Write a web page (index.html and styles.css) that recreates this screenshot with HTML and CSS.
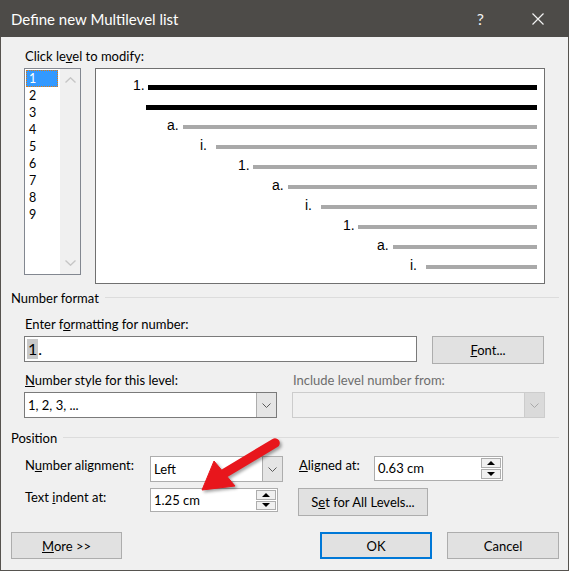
FILE: index.html
```html
<!DOCTYPE html>
<html lang="en">
<head>
    <meta charset="UTF-8">
    <title>Define new Multilevel list</title>
    <link rel="stylesheet" href="styles.css">
</head>
<body>
    <div class="dialog">
        <div class="titlebar">
            <span class="title-text">Define new Multilevel list</span>
            <span class="title-help">?</span>
            <svg class="title-close" width="12" height="12" viewBox="0 0 12 12">
                <path d="M0.5 0.5 L11.5 11.5 M11.5 0.5 L0.5 11.5" stroke="#f2f2f2" stroke-width="1.2" fill="none"/>
            </svg>
        </div>

        <div class="dialog-body">
            <div class="field-label indent">Click le<u>v</u>el to modify:</div>

            <div class="level-row">
                <div class="level-list">
                    <ul class="levels">
                        <li class="selected">1</li>
                        <li>2</li>
                        <li>3</li>
                        <li>4</li>
                        <li>5</li>
                        <li>6</li>
                        <li>7</li>
                        <li>8</li>
                        <li>9</li>
                    </ul>
                    <div class="level-scroll">
                        <svg width="11" height="6" viewBox="0 0 11 6"><path d="M0.5 5.5 L5.5 0.8 L10.5 5.5" stroke="#c6c6c6" stroke-width="1.4" fill="none"/></svg>
                        <svg width="11" height="6" viewBox="0 0 11 6"><path d="M0.5 0.5 L5.5 5.2 L10.5 0.5" stroke="#c6c6c6" stroke-width="1.4" fill="none"/></svg>
                    </div>
                </div>

                <div class="preview">
                    <div class="pv-row pv-1"><span class="pv-num">1.</span><span class="pv-line dark"></span></div>
                    <div class="pv-row pv-cont"><span class="pv-line dark"></span></div>
                    <div class="pv-row pv-2"><span class="pv-num">a.</span><span class="pv-line"></span></div>
                    <div class="pv-row pv-3"><span class="pv-num">i.</span><span class="pv-line"></span></div>
                    <div class="pv-row pv-4"><span class="pv-num">1.</span><span class="pv-line"></span></div>
                    <div class="pv-row pv-5"><span class="pv-num">a.</span><span class="pv-line"></span></div>
                    <div class="pv-row pv-6"><span class="pv-num">i.</span><span class="pv-line"></span></div>
                    <div class="pv-row pv-7"><span class="pv-num">1.</span><span class="pv-line"></span></div>
                    <div class="pv-row pv-8"><span class="pv-num">a.</span><span class="pv-line"></span></div>
                    <div class="pv-row pv-9"><span class="pv-num">i.</span><span class="pv-line"></span></div>
                </div>
            </div>

            <div class="group-head fmt-head"><span>Number format</span><i class="group-rule"></i></div>

            <div class="field-label indent fmt-label">Enter f<u>o</u>rmatting for number:</div>
            <div class="fmt-row">
                <div class="text-box format-box"><span class="sel">1</span>.</div>
                <button class="btn font-btn"><u>F</u>ont...</button>
            </div>

            <div class="style-grid">
                <div class="field-label"><u>N</u>umber style for this level:</div>
                <div class="field-label disabled">Include level number from:</div>
                <div class="combo">
                    <span class="combo-value">1, 2, 3, ...</span>
                    <span class="combo-arrow"><svg width="9" height="5" viewBox="0 0 9 5"><path d="M0.5 0.5 L4.5 4.5 L8.5 0.5" stroke="#5a5a5a" fill="none"/></svg></span>
                </div>
                <div class="combo combo-off">
                    <span class="combo-value"></span>
                    <span class="combo-arrow"><svg width="9" height="5" viewBox="0 0 9 5"><path d="M0.5 0.5 L4.5 4.5 L8.5 0.5" stroke="#a8a8a8" fill="none"/></svg></span>
                </div>
            </div>

            <div class="group-head pos-head"><span>Position</span><i class="group-rule"></i></div>

            <div class="pos-grid">
                <div class="field-label pos-label">N<u>u</u>mber alignment:</div>
                <div class="combo align-combo">
                    <span class="combo-value">Left</span>
                    <span class="combo-arrow"><svg width="9" height="5" viewBox="0 0 9 5"><path d="M0.5 0.5 L4.5 4.5 L8.5 0.5" stroke="#5a5a5a" fill="none"/></svg></span>
                </div>
                <div class="field-label pos-label col-right"><u>A</u>ligned at:</div>
                <div class="spin aligned-spin">
                    <span class="spin-value">0.63 cm</span>
                    <span class="spin-btns">
                        <span class="spin-btn"><svg width="8" height="4" viewBox="0 0 8 4"><path d="M0 4 L4 0 L8 4 Z" fill="#000"/></svg></span>
                        <span class="spin-btn"><svg width="8" height="4" viewBox="0 0 8 4"><path d="M0 0 L4 4 L8 0 Z" fill="#000"/></svg></span>
                    </span>
                </div>

                <div class="field-label pos-label">Text <u>i</u>ndent at:</div>
                <div class="spin indent-spin">
                    <span class="spin-value">1.25 cm</span>
                    <span class="spin-btns">
                        <span class="spin-btn"><svg width="8" height="4" viewBox="0 0 8 4"><path d="M0 4 L4 0 L8 4 Z" fill="#000"/></svg></span>
                        <span class="spin-btn"><svg width="8" height="4" viewBox="0 0 8 4"><path d="M0 0 L4 4 L8 0 Z" fill="#000"/></svg></span>
                    </span>
                </div>
                <button class="btn all-levels-btn">S<u>e</u>t for All Levels...</button>
            </div>

            <div class="button-row">
                <button class="btn"><u>M</u>ore &gt;&gt;</button>
                <button class="btn ok-btn">OK</button>
                <button class="btn">Cancel</button>
            </div>
        </div>

        <!-- red callout arrow pasted over the screenshot -->
        <svg class="callout" width="100" height="70" viewBox="190 430 100 70">
            <g fill="#e8161c" stroke="#e8161c">
                <line x1="274" y1="443" x2="224" y2="473" stroke-width="9.5" stroke-linecap="round"/>
                <polygon points="201,490 213,461 234,486" stroke-width="1" stroke-linejoin="round"/>
            </g>
        </svg>
    </div>
</body>
</html>
```

FILE: styles.css
```css
body {
    margin: 0;
    background: #f0f0f0;
    font-family: "Segoe UI", Lato, "Liberation Sans", sans-serif;
    font-size: 13px;
    color: #000;
}

u {
    text-underline-offset: 1px;
}

.dialog {
    position: relative;
    width: 569px;
    height: 571px;
    box-sizing: border-box;
    border: 1px solid #56534f;
    border-top: none;
    background: #f0f0f0;
}

.titlebar {
    height: 37px;
    margin: 0 -1px;
    background: #4d4b48;
    color: #fff;
    display: flex;
    align-items: center;
    padding-left: 11px;
}

.title-text {
    font-size: 15px;
    flex: 1;
}

.title-help {
    font-size: 16px;
    margin-right: 48px;
    color: #f2f2f2;
}

.title-close {
    margin-right: 25px;
}

.dialog-body {
    padding: 0 9px 0 10px;
}

.field-label {
    line-height: 16px;
    white-space: nowrap;
}

.indent {
    padding-left: 14px;
}

.field-label.disabled {
    color: #6d6d6d;
}

/* level picker + preview */

.level-row {
    display: flex;
    align-items: flex-start;
    gap: 14px;
    margin-top: 4px;
    padding-left: 13px;
}

.field-label.indent:first-child {
    margin-top: 11px;
}

.level-list {
    width: 57px;
    height: 207px;
    box-sizing: border-box;
    border: 1px solid #828790;
    display: flex;
    background: #fff;
}

.levels {
    list-style: none;
    margin: 0;
    padding: 1px 1px 0 1px;
    width: 32px;
    font-size: 12.5px;
}

.levels li {
    height: 17px;
    line-height: 17px;
    padding-left: 3px;
    box-sizing: border-box;
}

.levels li.selected {
    background: #3399ff;
    color: #fff;
    outline: 1px dotted #e07a10;
    outline-offset: -1px;
}

.level-scroll {
    flex: 1;
    margin-left: 1px;
    background: #f0f0f0;
    display: flex;
    flex-direction: column;
    justify-content: space-between;
    align-items: center;
    padding: 8px 0 8px;
}

.preview {
    width: 450px;
    height: 216px;
    box-sizing: border-box;
    border: 1px solid #707070;
    background: #fff;
    padding: 2px 7px 0 0;
}

.pv-row {
    height: 20px;
    display: flex;
    align-items: flex-end;
}

.pv-num {
    width: 15px;
    flex: none;
    font-family: "Liberation Sans", Arial, sans-serif;
    font-size: 14px;
    line-height: 14px;
    margin-bottom: -1px;
}

.pv-line {
    flex: 1;
    height: 4px;
    margin-bottom: 2px;
    background: #a9a9a9;
}

.pv-line.dark {
    height: 5px;
    margin-bottom: 1px;
    background: #000;
}

.pv-1 { padding-left: 37px; }
.pv-cont { padding-left: 50px; }
.pv-2 { padding-left: 71px; }
.pv-3 { padding-left: 104px; }
.pv-4 { padding-left: 142px; }
.pv-5 { padding-left: 176px; }
.pv-6 { padding-left: 209px; }
.pv-7 { padding-left: 247px; }
.pv-8 { padding-left: 281px; }
.pv-9 { padding-left: 314px; }

.pv-2 .pv-num, .pv-3 .pv-num, .pv-5 .pv-num,
.pv-6 .pv-num, .pv-8 .pv-num, .pv-9 .pv-num {
    width: 16px;
}

/* group headings with the etched rule */

.group-head {
    display: flex;
    align-items: center;
    line-height: 16px;
}

.group-rule {
    flex: 1;
    height: 1px;
    margin: 0 0 1px 6px;
    background: #dcdcdc;
}

.fmt-head {
    margin-top: 6px;
}

.pos-head {
    margin-top: 12px;
}

.fmt-label {
    margin-top: 10px;
}

.fmt-row {
    display: flex;
    align-items: flex-start;
    gap: 15px;
    margin-top: 4px;
    padding-left: 13px;
}

.text-box {
    box-sizing: border-box;
    border: 1px solid #7a7a7a;
    background: #fff;
}

.format-box {
    width: 393px;
    height: 26px;
    font-size: 16px;
    line-height: 20px;
    padding: 2px 0 0 2px;
}

.format-box .sel {
    background: #c8c8c8;
    display: inline-block;
    padding: 0 1px;
}

.btn {
    box-sizing: border-box;
    height: 27px;
    width: 111px;
    border: 1px solid #adadad;
    background: #e1e1e1;
    font-family: inherit;
    font-size: 13px;
    color: #000;
    padding: 0;
}

.font-btn {
    width: 112px;
    height: 28px;
}

.style-grid {
    display: grid;
    grid-template-columns: 253px 253px;
    column-gap: 15px;
    row-gap: 4px;
    margin-top: 8px;
    padding-left: 13px;
}

.style-grid .field-label {
    padding-left: 1px;
}

.combo {
    box-sizing: border-box;
    height: 26px;
    border: 1px solid #7a7a7a;
    background: #fff;
    display: flex;
}

.combo-value {
    flex: 1;
    padding-left: 3px;
    line-height: 24px;
    font-size: 13px;
}

.combo-arrow {
    width: 19px;
    background: #e5e5e5;
    border-left: 1px solid #adadad;
    display: flex;
    align-items: center;
    justify-content: center;
}

.combo-off {
    border-color: #cccccc;
    background: #f0f0f0;
}

.combo-off .combo-arrow {
    background: #dadada;
    border-left-color: #cccccc;
}

/* position grid */

.pos-grid {
    display: grid;
    grid-template-columns: 126px 133px 15px 76px 129px;
    grid-template-rows: 26px 28px;
    row-gap: 6px;
    margin-top: 10px;
    padding-left: 13px;
}

.pos-label {
    padding: 1px 0 0 1px;
}

.col-right {
    grid-column: 4;
}

.align-combo {
    border-color: #adadad;
}

.spin {
    box-sizing: border-box;
    border: 1px solid #adadad;
    background: #fff;
    display: flex;
}

.aligned-spin {
    height: 25px;
}

.indent-spin {
    height: 24px;
    width: 128px;
}

.spin-value {
    flex: 1;
    padding-left: 3px;
    font-size: 13px;
    line-height: 22px;
}

.spin-btns {
    width: 20px;
    display: flex;
    flex-direction: column;
    padding: 1px 1px 1px 0;
    gap: 1px;
}

.spin-btn {
    flex: 1;
    border: 1px solid #adadad;
    background: #f0f0f0;
    display: flex;
    align-items: center;
    justify-content: center;
}

.all-levels-btn {
    grid-column: 4 / span 2;
    width: 130px;
    height: 28px;
}

.button-row {
    display: flex;
    gap: 15px;
    margin-top: 16px;
}

.button-row .btn:first-child {
    margin-right: auto;
}

.ok-btn {
    width: 112px;
    border: 2px solid #0078d7;
}

.button-row .btn:last-child {
    width: 112px;
}

.callout {
    position: absolute;
    left: 190px;
    top: 430px;
    filter: drop-shadow(2px 2px 1.5px rgba(0, 0, 0, 0.35));
}
```
